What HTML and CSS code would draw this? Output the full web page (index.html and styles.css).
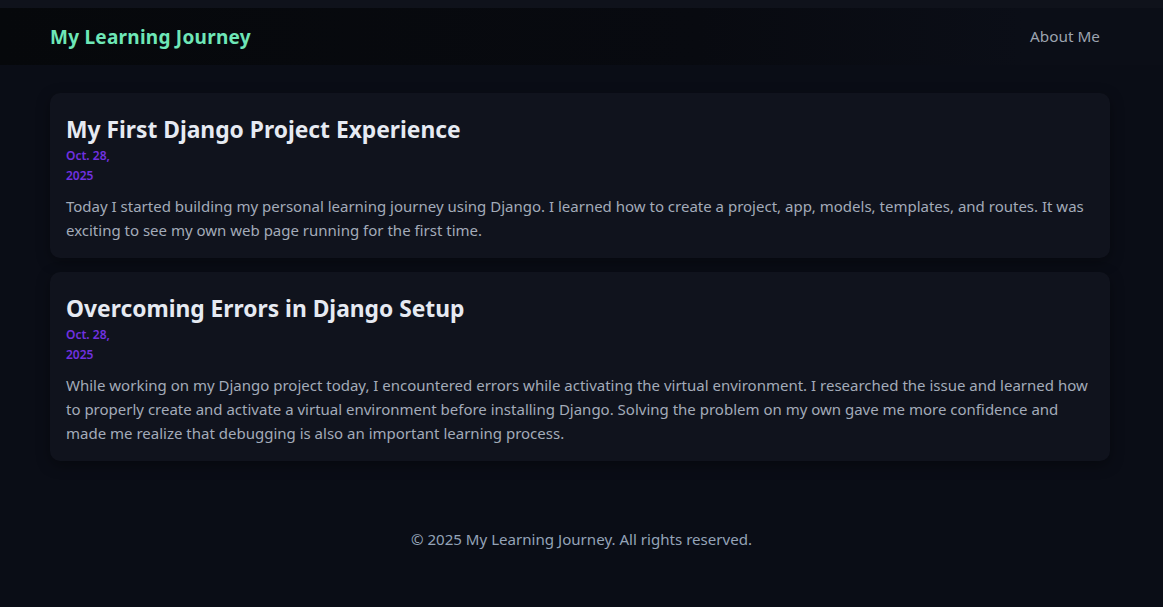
FILE: index.html
```html
<!DOCTYPE html>
<html lang="en">
<head>
<meta charset="utf-8">
<title>My Learning Journey</title>
<link rel="stylesheet" href="styles.css">
</head>
<body>
<div class="page">
  <header class="site-header">
    <a class="brand" href="#">My Learning Journey</a>
    <nav class="nav"><a href="#">About Me</a></nav>
  </header>
  <main class="posts">
    <article class="card">
      <h2 class="card-title">My First Django Project Experience</h2>
      <div class="card-date">Oct. 28, 2025</div>
      <p class="card-body">Today I started building my personal learning journey using Django. I learned how to create a project, app, models, templates, and routes. It was exciting to see my own web page running for the first time.</p>
    </article>
    <article class="card">
      <h2 class="card-title">Overcoming Errors in Django Setup</h2>
      <div class="card-date">Oct. 28, 2025</div>
      <p class="card-body">While working on my Django project today, I encountered errors while activating the virtual environment. I researched the issue and learned how to properly create and activate a virtual environment before installing Django. Solving the problem on my own gave me more confidence and made me realize that debugging is also an important learning process.</p>
    </article>
  </main>
  <footer class="site-footer">© 2025 My Learning Journey. All rights reserved.</footer>
</div>
</body>
</html>
```
FILE: styles.css
```css
html, body {
  margin: 0;
  padding: 0;
  background: #0a0d16;
  font-family: "Noto Sans", "Open Sans", sans-serif;
}
.page {
  min-height: 607px;
  padding-top: 8px;
  background: linear-gradient(180deg, #0f121b 0, #0f121b 8px, #0a0d16 8px);
  box-sizing: border-box;
}
.site-header {
  height: 57px;
  display: flex;
  align-items: center;
  justify-content: space-between;
  padding: 0 63px 0 50px;
  background: linear-gradient(90deg, #06080b 0%, #080a10 60%, #0b0e17 88%, #0b0e17 100%);
}
.brand {
  color: #6ee7b7;
  font-weight: 700;
  font-size: 19px;
  text-decoration: none;
  letter-spacing: 0.25px;
}
.nav {
  padding-bottom: 2px;
}
.nav a {
  color: #9ca3af;
  font-size: 15.3px;
  text-decoration: none;
}
.posts {
  padding: 28px 53px 0 50px;
  display: flex;
  flex-direction: column;
  gap: 14px;
}
.card {
  background: #10131d;
  border-radius: 10px;
  padding: 21px 16px 16px;
  box-shadow: 0 4px 14px rgba(0, 0, 0, 0.35);
}
.card-title {
  margin: 0;
  color: #e6eaf2;
  font-size: 22.8px;
  font-weight: 700;
  line-height: 32px;
}
.card-date {
  width: 60px;
  color: #7031e0;
  font-size: 12px;
  font-weight: 600;
  line-height: 20px;
}
.card-body {
  margin: 8px 0 0;
  color: #a3abb9;
  font-size: 15px;
  line-height: 24px;
}
.site-footer {
  padding: 68px 0 40px;
  text-align: center;
  color: #94a3b8;
  font-size: 15.1px;
}
```
